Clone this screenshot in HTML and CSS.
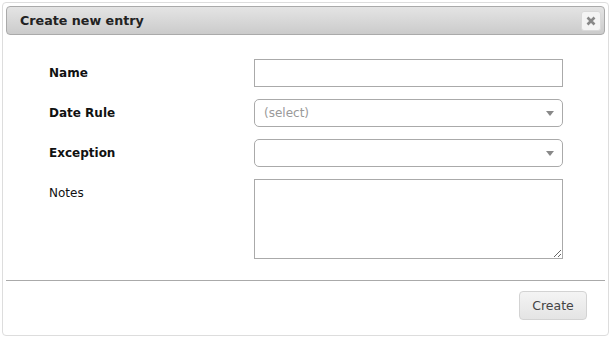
FILE: index.html
```html
<!DOCTYPE html>
<html lang="en">
<head>
  <meta charset="UTF-8" />
  <title>Create new entry</title>
  <link rel="stylesheet" href="styles.css">
</head>
<body>
  <div class="dialog">
    <div class="titlebar">
      <span class="title">Create new entry</span>
      <button class="close" title="Close">
        <svg width="10" height="10" viewBox="0 0 10 10">
          <path d="M1.5 1.5 L8.5 8.5 M8.5 1.5 L1.5 8.5" stroke="#888" stroke-width="2.6" stroke-linecap="butt"/>
        </svg>
      </button>
    </div>

    <form class="entry-form">
      <label class="field-label req" for="name">Name</label>
      <input type="text" id="name" class="text-input">

      <label class="field-label req" for="daterule">Date Rule</label>
      <div class="select-wrap">
        <select id="daterule" class="select-input placeholder">
          <option>(select)</option>
        </select>
        <span class="select-arrow"></span>
      </div>

      <label class="field-label req" for="exception">Exception</label>
      <div class="select-wrap">
        <select id="exception" class="select-input">
          <option></option>
        </select>
        <span class="select-arrow"></span>
      </div>

      <label class="field-label" for="notes">Notes</label>
      <textarea id="notes" class="notes-input"></textarea>
    </form>

    <div class="buttonpane">
      <button class="btn">Create</button>
    </div>
  </div>
</body>
</html>
```

FILE: styles.css
```css
body {
  margin: 0;
  padding: 2px;
  background: #fff;
  font-family: "DejaVu Sans", Verdana, sans-serif;
}
.dialog {
  box-sizing: border-box;
  width: 607px;
  height: 334px;
  padding: 3px;
  border: 1px solid #ddd;
  border-radius: 4px;
  background: #fff;
  color: #222;
}
.titlebar {
  display: flex;
  align-items: center;
  justify-content: space-between;
  height: 29px;
  box-sizing: border-box;
  padding: 0 3px 0 13px;
  border: 1px solid #aaa;
  border-radius: 4px;
  background: linear-gradient(#e4e4e4, #cbcbcb);
}
.title {
  font-size: 12.7px;
  font-weight: bold;
  color: #222;
}
.close {
  width: 20px;
  height: 20px;
  padding: 0;
  display: flex;
  align-items: center;
  justify-content: center;
  border: 1px solid #d9d9d9;
  border-radius: 3px;
  background: #f4f4f4;
  cursor: pointer;
}
.entry-form {
  display: grid;
  grid-template-columns: 205px 309px;
  row-gap: 12px;
  padding: 24px 0 0 43px;
}
.field-label {
  font-size: 12px;
  line-height: 28px;
  color: #111;
}
.field-label.req {
  font-weight: bold;
}
.text-input,
.select-input,
.notes-input {
  box-sizing: border-box;
  width: 309px;
  margin: 0;
  border: 1px solid #aaa;
  background: #fff;
  font-family: inherit;
  font-size: 12px;
}
.text-input {
  height: 28px;
  border-radius: 0;
}
.select-wrap {
  position: relative;
}
.select-input {
  height: 28px;
  padding: 0 24px 0 9px;
  border-radius: 5px;
  appearance: none;
  color: #222;
}
.select-input.placeholder {
  color: #999;
}
.select-arrow {
  position: absolute;
  right: 9px;
  top: 12px;
  width: 0;
  height: 0;
  border-left: 4px solid transparent;
  border-right: 4px solid transparent;
  border-top: 5px solid #888;
}
.notes-input {
  height: 80px;
  border-radius: 0;
  resize: both;
}
.buttonpane {
  display: flex;
  justify-content: flex-end;
  margin-top: 21px;
  padding: 10px 18px 0 0;
  border-top: 1px solid #aaa;
}
.btn {
  width: 68px;
  height: 29px;
  border: 1px solid #d3d3d3;
  border-radius: 4px;
  background: linear-gradient(#f4f4f4, #e4e4e4);
  color: #444;
  font-family: inherit;
  font-size: 12.5px;
  cursor: pointer;
}
```
